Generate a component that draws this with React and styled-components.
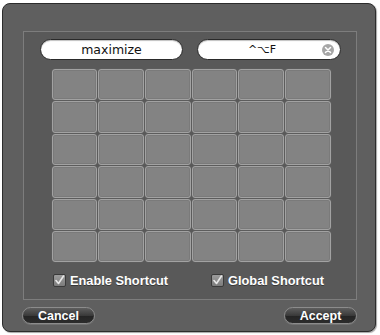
import React from "react";
import styled, { createGlobalStyle } from "styled-components";

const Global = createGlobalStyle`
  html, body { margin: 0; padding: 0; background: #ffffff; }
  body { font-family: "Liberation Sans", Arial, sans-serif; }
`;

const Page = styled.div`
  width: 380px;
  height: 335px;
  padding: 3px 0 0 2px;
  box-sizing: border-box;
`;

const Window = styled.div`
  width: 374px;
  height: 329px;
  box-sizing: border-box;
  background: #5f5f5f;
  border: 1px solid #2c2c2c;
  border-radius: 8px;
  box-shadow: 1px 1px 1px rgba(0,0,0,0.35);
  padding: 27px 18px 0 20px;
  display: flex;
  flex-direction: column;
`;

const Panel = styled.div`
  height: 269px;
  box-sizing: border-box;
  border: 1px solid #7d7d7d;
  background: #595959;
  padding: 7px 14px 0 16px;
  display: flex;
  flex-direction: column;
  align-items: stretch;
`;

const FieldRow = styled.div`
  display: flex;
  gap: 14px;
`;

const Field = styled.div`
  position: relative;
  width: ${p => p.$w}px;
  height: 21px;
  box-sizing: border-box;
  padding-right: ${p => p.$pr || 0}px;
  background: #ffffff;
  border: 1px solid #2a2a2a;
  border-radius: 11px;
  display: flex;
  align-items: center;
  justify-content: center;
  color: #111;
  font-family: "DejaVu Sans", sans-serif;
  font-size: ${p => p.$fs || 12.5}px;
  box-shadow: inset 0 1px 1px rgba(0,0,0,0.25);
`;

const ClearBtn = styled.div`
  position: absolute;
  right: 6px;
  top: 4px;
  width: 12px;
  height: 12px;
  border-radius: 50%;
  background: #a6a6a6;
  display: flex;
  align-items: center;
  justify-content: center;
`;

const Grid = styled.div`
  align-self: center;
  margin-top: 9px;
  width: 279px;
  display: grid;
  grid-template-columns: repeat(6, 1fr);
  grid-auto-rows: 31.4px;
  gap: 1px;
`;

const Cell = styled.div`
  box-sizing: border-box;
  background: #838383;
  border: 1px solid #a2a2a2;
  border-radius: 3px;
  box-shadow: 0 0 0 1px #5c5c5c, inset 0 0 0 1px #7a7a7a;
`;

const CheckRow = styled.div`
  display: flex;
  margin-top: 11px;
  padding-left: 13px;
`;

const CheckItem = styled.label`
  flex: 0 0 auto;
  display: flex;
  align-items: center;
  gap: 4px;
  width: ${p => p.$w}px;
  color: #ffffff;
  font-weight: bold;
  font-size: 12.8px;
  font-family: "Liberation Sans", Arial, sans-serif;
  text-shadow: 0 1px 0 rgba(0,0,0,0.4);
`;

const Box = styled.span`
  width: 13px;
  height: 13px;
  box-sizing: border-box;
  border: 1px solid #3a3a3a;
  border-radius: 2px;
  background: linear-gradient(#9c9c9c, #7c7c7c);
  display: flex;
  align-items: center;
  justify-content: center;
`;

const ButtonRow = styled.div`
  display: flex;
  justify-content: space-between;
  margin-top: 7px;
  margin-left: -1px;
`;

const Button = styled.div`
  width: 73px;
  height: 17px;
  box-sizing: border-box;
  border-radius: 9px;
  border: 1px solid #8c8c8c;
  background: linear-gradient(#5e5e5e 0%, #3a3a3a 50%, #242424 51%, #2c2c2c 100%);
  color: #fff;
  font-weight: bold;
  font-size: 12.5px;
  display: flex;
  align-items: center;
  justify-content: center;
  box-shadow: 0 1px 0 rgba(255,255,255,0.12);
`;

const Check = () => (
  <svg width="11" height="11" viewBox="0 0 11 11">
    <path d="M2 5.5 L4.5 8.5 L9.5 1" fill="none" stroke="#e8e8e8" strokeWidth="1.6" strokeLinecap="round" strokeLinejoin="round" />
  </svg>
);

export default function App() {
  const cells = Array.from({ length: 36 });
  return (
    <>
      <Global />
      <Page>
        <Window>
          <Panel>
            <FieldRow>
              <Field $w={143}>maximize</Field>
              <Field $w={144} $fs={11} $pr={14}>
                ^⌥F
                <ClearBtn>
                  <svg width="8" height="8" viewBox="0 0 8 8">
                    <path d="M1.5 1.5 L6.5 6.5 M6.5 1.5 L1.5 6.5" stroke="#fff" strokeWidth="1.5" strokeLinecap="round" />
                  </svg>
                </ClearBtn>
              </Field>
            </FieldRow>
            <Grid>
              {cells.map((_, i) => <Cell key={i} />)}
            </Grid>
            <CheckRow>
              <CheckItem $w={158}><Box><Check /></Box>Enable Shortcut</CheckItem>
              <CheckItem $w={120}><Box><Check /></Box>Global Shortcut</CheckItem>
            </CheckRow>
          </Panel>
          <ButtonRow>
            <Button>Cancel</Button>
            <Button>Accept</Button>
          </ButtonRow>
        </Window>
      </Page>
    </>
  );
}
